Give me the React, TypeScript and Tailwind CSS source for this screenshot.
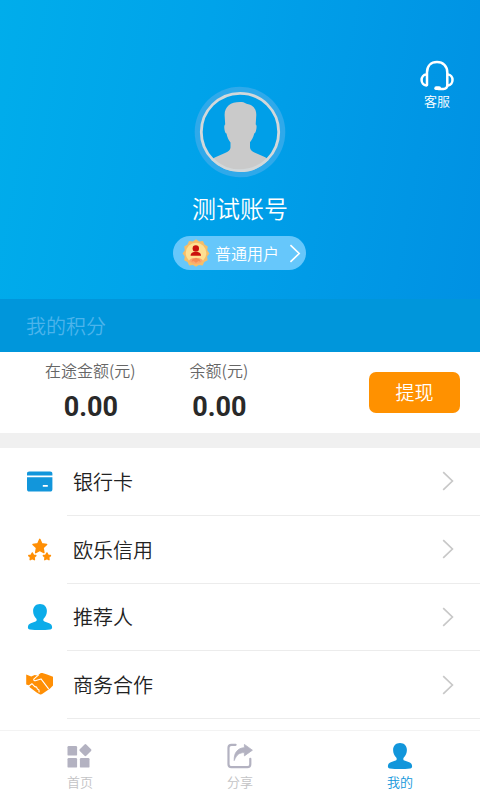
import React from "react";

const HeadsetIcon = () => (
    <svg width="34" height="31" viewBox="0 0 34 31" fill="none" stroke="#fff" strokeWidth="2.5" strokeLinecap="round" strokeLinejoin="round">
        <path d="M7 25V12.500C7 6 11 2 17 2s10.300 4 10.300 10.500V25c0 2.800-1.200 3.900-3.800 3.900h-5" />
        <path d="M6.300 14.600c-2.800.2-4.700 2.500-4.700 5.400s1.900 5.200 4.700 5.400M28 14.600c2.700.2 4.500 2.500 4.500 5.400s-1.800 5.200-4.500 5.400" />
        <path d="M16.200 28.200h3" strokeWidth="3.800" />
    </svg>
);

const Avatar = () => (
    <svg className="block" width="92" height="92" viewBox="0 0 92 92">
        <defs>
            <clipPath id="face">
                <circle cx="46" cy="46" r="40" />
            </clipPath>
        </defs>
        <circle cx="46" cy="46" r="45.300" fill="#2fa9ea" />
        <circle cx="46" cy="46" r="38.300" fill="#009fe8" />
        <path
            clipPath="url(#face)"
            fill="#cacaca"
            d="M46 16c2.500 0 4.500.4 6.500 1.700 6.500 1 9.800 5 9.800 11.300l-.6 9.500c1.300.4 1 3.500.2 6.500-.4 1.500-1 2.200-1.700 2.400-.8 3.800-2.500 6.700-4.200 8.800v5c0 2.500 2 4.300 5 5.600l8 3.400c3.300 1.400 5 2.500 6 4V88H17V74.500c1-1.500 2.700-2.700 6-4.100l8-3.400c3-1.300 5.500-3 5.500-5.500v-5c-1.700-2.200-3.300-5.300-4-9.100-.8-.2-1.400-.9-1.700-2.400-.7-3-.9-5.900.4-6.500L30.600 29C30.600 20.500 36.500 16 46 16z"
        />
        <circle cx="46" cy="46" r="38.700" fill="none" stroke="#d3d8da" strokeWidth="2.800" />
    </svg>
);

const MedalIcon = () => (
    <svg width="28" height="28" viewBox="0 0 28 28">
        <path
            fill="#f6bd68"
            d="M14 .3l3.200 2.100 3.800-.3 1.500 3.500 3.300 1.900-.6 3.800 2.300 3.100-2.400 3.100.6 3.800-3.400 1.700-1.700 3.400-3.800-.4L14 27.700 11 26l-3.800.4-1.700-3.400-3.300-1.700.6-3.800-2.300-3.100 2.300-3.100-.6-3.800 3.300-1.900L7 2.100l3.800.3z"
        />
        <circle cx="14" cy="14" r="10.300" fill="#ffdf91" />
        <path fill="#faa870" d="M7 21.500c1.500-1.800 3.500-3 5-2.500l2 .8 2-.8c1.500-.5 3.500.7 5 2.500-1.700 2.400-4.300 3.500-7 3.500s-5.300-1.100-7-3.500z" />
        <path fill="#f78b55" d="M10.500 20.200l3.500-1.400 3.500 1.400 1 2.600-2-.9-2.500 1.800-2.500-1.800-2 .9z" />
        <circle cx="13.800" cy="9.500" r="3.200" fill="#cb100c" />
        <path fill="#cb100c" d="M8.600 16.800c0-2 1.200-3.500 3.200-3.700h4c2 .2 3.200 1.700 3.200 3.700z" />
    </svg>
);

const Chevron = ({ className = "" }: { className?: string }) => (
    <svg className={className} width="12" height="20" viewBox="0 0 12 20" fill="none" stroke="currentColor" strokeWidth="1.700">
        <path d="M1.200 1.200L10.400 10l-9.200 8.800" />
    </svg>
);

const CardIcon = () => (
    <svg width="28" height="28" viewBox="0 0 28 28" fill="#1296db">
        <path d="M3.300 3.500h20.800c1.500 0 2.300.8 2.300 2.300v1.800H1V5.800c0-1.500.8-2.300 2.300-2.300z" />
        <path fillRule="evenodd" d="M1 9.300h25.400v11.900c0 1.500-.8 2.300-2.300 2.300H3.300c-1.500 0-2.300-.8-2.300-2.300zM16.800 17v1.700h5V17z" />
    </svg>
);

const StarsIcon = () => (
    <svg width="28" height="28" viewBox="0 0 28 28" fill="#ff8f05" stroke="#ff8f05" strokeWidth="1.500" strokeLinejoin="round">
        <path d="M13.800 3.400l2 4.300 4.800.7-3.500 3.400.8 4.800-4.100-2.300-4.100 2.300.8-4.800L7 8.400l4.800-.7z" />
        <path d="M6.300 17l1.100 2.200 2.400.4-1.700 1.700.3 2.400-2.100-1.100-2.100 1.100.3-2.400-1.700-1.700 2.400-.4zM20.900 17l1.100 2.200 2.400.4-1.700 1.700.3 2.400-2.100-1.100-2.100 1.100.3-2.400-1.700-1.700 2.400-.4z" />
    </svg>
);

const PersonIcon = () => (
    <svg width="28" height="28" viewBox="0 0 28 28" fill="currentColor">
        <path d="M14 1c4.200 0 6.900 2.800 6.900 7 0 3.300-1.300 5.600-3.100 7.600-.9 1-.6 2.500.7 3l4.700 1.600c2 .7 2.900 2 2.900 4 0 1.400-.6 2-1.900 2.200-6.400.8-14 .8-20.400 0-1.300-.2-1.900-.8-1.900-2.200 0-2 .9-3.300 2.900-4l4.700-1.600c1.300-.5 1.600-2 .7-3C8.400 13.600 7.100 11.300 7.100 8c0-4.200 2.700-7 6.900-7z" />
    </svg>
);

const HandshakeIcon = () => (
    <svg width="28" height="28" viewBox="0 0 28 28">
        <path
            fill="#ff8f05"
            d="M.2 3.600l5 2 3.500-1.500 2.400.3 3.100-2c.7-.4 1.300-.5 2.200-.3l4.700 1.300L27 5.700v8.800l-2.900 2.900-7.600 5.400c-.9.600-1.900.8-2.800.4L11 21.800l-7-5.400-1.300-2.200-2.500-.6z"
        />
        <path
            fill="none"
            stroke="#fff"
            strokeWidth="1.100"
            strokeLinecap="round"
            strokeLinejoin="round"
            d="M12.600 3.800L7.800 8.100c-.4 1.500.9 2 2.200 1.500l5-1.700 7.400 9.800M3 15l2.900-2.300 2.900 2.900 1.800.5.800 1.900 1.500.9.200 2"
        />
    </svg>
);

const HomeIcon = () => (
    <svg width="28" height="28" viewBox="0 0 28 28" fill="#b3b2c1">
        <rect x="1.500" y="4" width="9.600" height="9.600" rx="1.200" />
        <rect x="1.500" y="16" width="9.600" height="9.600" rx="1.200" />
        <rect x="13.900" y="16" width="9.600" height="9.600" rx="1.200" />
        <rect x="14.800" y="3.500" width="9.200" height="9.200" rx="1.200" transform="rotate(45 19.400 8.100)" />
    </svg>
);

const ShareIcon = () => (
    <svg width="28" height="28" viewBox="0 0 28 28">
        <path fill="none" stroke="#b3b2c1" strokeWidth="2.200" strokeLinecap="round" d="M9.600 2.800H5.500c-1.900 0-3 1-3 3v16.400c0 2 1.100 3 3 3h15.800c2 0 3-1 3-3v-5.400" />
        <path fill="#b3b2c1" stroke="#b3b2c1" strokeLinejoin="round" strokeWidth=".8" d="M18.400 2.400l8 5.800-8 5.700v-3.300c-5 0-7.800 2-10.200 8C7.800 11 11.500 6 18.400 5.700z" />
    </svg>
);

const menu = [
    { label: "银行卡", icon: <CardIcon /> },
    { label: "欧乐信用", icon: <StarsIcon /> },
    { label: "推荐人", icon: <PersonIcon /> },
    { label: "商务合作", icon: <HandshakeIcon /> },
];

const tabs = [
    { label: "首页", icon: <HomeIcon />, color: "text-[#c3c3c5]" },
    { label: "分享", icon: <ShareIcon />, color: "text-[#c3c3c5]" },
    { label: "我的", icon: <PersonIcon />, color: "text-[#1296db]" },
];

const Amount = ({ label, value }: { label: string; value: string }) => (
    <div className="flex flex-col items-center">
        <span className="text-base leading-6 text-[#666]">{label}</span>
        <span className="mt-[9px] pl-px font-[Roboto] text-[27px] leading-8 font-bold text-[#292929]">{value}</span>
    </div>
);

export default function App() {
    return (
        <div className="flex h-[800px] w-[480px] flex-col overflow-hidden bg-white font-['Noto_Sans_CJK_SC',sans-serif] font-[350]">
            {/* Profile header */}
            <header className="relative flex h-[299px] shrink-0 flex-col items-center bg-[linear-gradient(100deg,#00adeb_0%,#00a3ea_40%,#0091e3_100%)] pt-[86px] text-white">
                <Avatar />
                <h1 className="mt-3 text-2xl leading-9 font-[350]">测试账号</h1>
                <button className="mt-[10px] mr-px flex h-[34px] w-[133px] items-center rounded-full bg-[#66c7fb] pl-[9px]">
                    <MedalIcon />
                    <span className="ml-[5px] text-base leading-6 whitespace-nowrap">普通用户</span>
                    <Chevron className="ml-[10px] h-[19px]" />
                </button>
                <div className="absolute top-[60px] right-[26px] flex flex-col items-center">
                    <HeadsetIcon />
                    <span className="text-[13px] leading-5">客服</span>
                </div>
            </header>

            <div className="flex h-[53px] shrink-0 items-center bg-[#0096db] pl-[26px] text-xl text-[#4cb4eb]">我的积分</div>

            {/* Balance */}
            <section className="flex h-[81px] shrink-0 items-start pt-[6px] pr-5 pl-[45px]">
                <Amount label="在途金额(元)" value="0.00" />
                <div className="ml-[54px]">
                    <Amount label="余额(元)" value="0.00" />
                </div>
                <button className="mt-[14px] ml-auto h-[41px] w-[91px] rounded-[7px] bg-[#ff9100] text-[19px] text-white">提现</button>
            </section>

            <div className="h-[15px] shrink-0 bg-[#f0f0f0]" />

            <ul className="h-[282px] shrink-0 overflow-hidden">
                {menu.map((item) => (
                    <li key={item.label} className="flex h-[67.750px] items-center">
                        <span className="ml-[26px] text-[#0cace9]">{item.icon}</span>
                        <div className="ml-[13px] flex h-full flex-1 items-center justify-between border-b border-[#ececec] pr-[26px] pl-[6px]">
                            <span className="pt-px text-xl text-[#222]">{item.label}</span>
                            <Chevron className="text-[#c8c8c8]" />
                        </div>
                    </li>
                ))}
            </ul>

            {/* Tab bar */}
            <nav className="grid h-[70px] shrink-0 grid-cols-3 border-t border-[#f3f3f3]">
                {tabs.map((tab) => (
                    <div key={tab.label} className={`flex flex-col items-center pt-[11px] ${tab.color}`}>
                        {tab.icon}
                        <span className="mt-[2px] text-[13px] leading-5">{tab.label}</span>
                    </div>
                ))}
            </nav>
        </div>
    );
}
